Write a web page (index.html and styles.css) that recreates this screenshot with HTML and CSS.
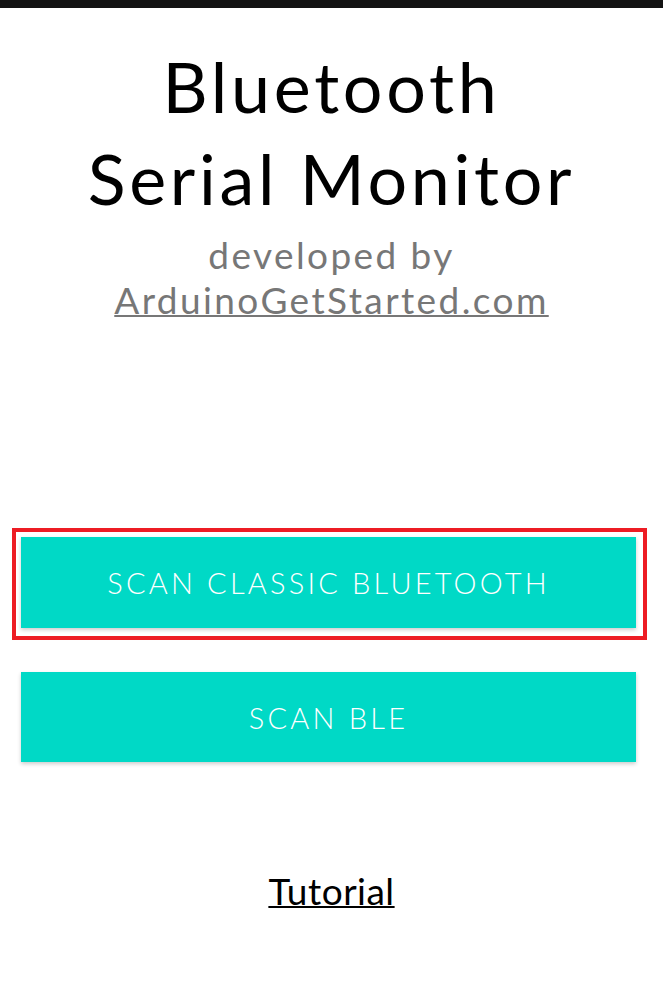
FILE: index.html
```html
<!DOCTYPE html>
<html>
<head>
<meta charset="utf-8">
<link rel="stylesheet" href="styles.css">
</head>
<body>
<div class="statusbar"></div>
<main class="page">
  <h1 class="title">Bluetooth<br>Serial Monitor</h1>
  <p class="credit">developed by<br><a class="credit-link" href="#">ArduinoGetStarted.com</a></p>
  <div class="highlight">
    <button class="scan-btn">SCAN CLASSIC BLUETOOTH</button>
  </div>
  <button class="scan-btn scan-ble">SCAN BLE</button>
  <a class="tutorial" href="#">Tutorial</a>
</main>
</body>
</html>
```
FILE: styles.css
```css
html, body {
  margin: 0;
  padding: 0;
  background: #ffffff;
}
body {
  font-family: "Lato", "DejaVu Sans", sans-serif;
  width: 663px;
  height: 987px;
  overflow: hidden;
}
.statusbar {
  height: 8px;
  background: #131313;
}
.page {
  display: flex;
  flex-direction: column;
  align-items: center;
}
.title {
  margin: 32px 0 0;
  font-weight: 400;
  font-size: 70px;
  line-height: 92px;
  letter-spacing: 3.7px;
  color: #000;
  text-align: center;
}
.credit {
  margin: 8px 0 0;
  font-weight: 400;
  font-size: 37px;
  line-height: 45px;
  letter-spacing: 2.4px;
  color: #777777;
  text-align: center;
}
.credit-link {
  color: #777777;
  text-decoration: underline;
  text-decoration-thickness: 2px;
}
.highlight {
  align-self: flex-start;
  margin: 206px 0 0 12px;
  width: 615px;
  border: 4px solid #ed1c24;
  padding: 5px 7px 8px 5px;
}
.scan-btn {
  display: block;
  width: 615px;
  height: 91px;
  border: none;
  background: #00d9c6;
  color: #ffffff;
  font-family: inherit;
  font-weight: 300;
  font-size: 29px;
  letter-spacing: 3.2px;
  box-shadow: 0 2px 4px rgba(0,0,0,0.2);
  padding: 0;
}
.scan-ble {
  align-self: flex-start;
  margin: 32px 0 0 21px;
  height: 90px;
}
.tutorial {
  margin-top: 106px;
  font-weight: 400;
  font-size: 37px;
  letter-spacing: 0.5px;
  color: #000;
  text-decoration: underline;
  text-decoration-thickness: 2px;
}
```
